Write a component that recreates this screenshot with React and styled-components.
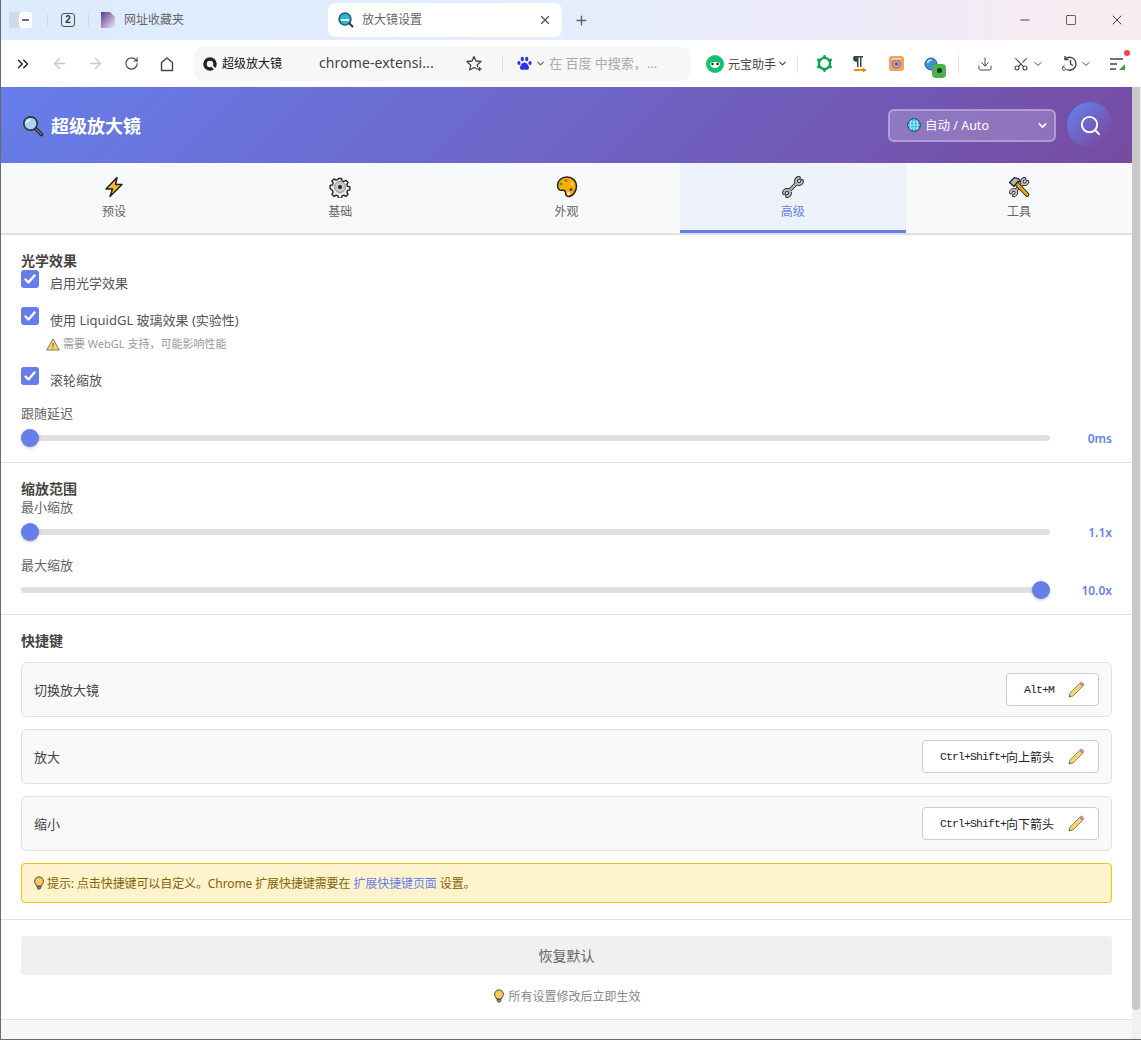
import React from "react";
import styled, { createGlobalStyle } from "styled-components";
import { ArrowLeft, ArrowRight, RotateCw, Download, Scissors, ChevronDown, ChevronsRight, Plus, X, Minus, Square, Search } from "lucide-react";

const cjk = `"Noto Sans", "Noto Sans CJK SC", sans-serif`;
const Global = createGlobalStyle`
  html, body { margin: 0; padding: 0; background: #fff; }
  body { font-family: ${cjk}; overflow: hidden; }
  * { box-sizing: border-box; }
`;

const Frame = styled.div`
  width: 1141px; height: 1040px; display: flex; flex-direction: column;
  border-left: 1px solid #6a6a6a; border-bottom: 1px solid #6a6a6a; background: #fff; overflow: hidden;
`;
const TitleBar = styled.div`
  height: 40px; flex: none; display: flex; align-items: center; padding-left: 8px;
  background: linear-gradient(90deg, #dcecfd 0%, #e4edfd 50%, #eceafb 70%, #f9ecef 100%);
`;
const ToggleIcon = styled.div`
  width: 23px; height: 16px; border-radius: 3px; background: #cfdbe8; display: flex; justify-content: flex-end;
`;
const ToggleInner = styled.div`
  width: 13px; height: 16px; background: #fff; border-radius: 3px; display: flex; align-items: center; justify-content: center;
  &::before { content: ""; width: 7px; height: 2px; background: #6d7278; }
`;
const TitleSep = styled.div`
  width: 1px; height: 12px; background: #cdd6e2; margin: ${p => p.$m};
`;
const CountBadge = styled.div`
  width: 14px; height: 14px; border: 1.5px solid #4a5058; border-radius: 3px; font-size: 10px; line-height: 11px;
  text-align: center; color: #333; font-weight: 700; font-family: "Liberation Sans", sans-serif;
`;
const FolderIcon = styled.svg`
  margin-right: 8px; flex: none;
`;
const TabText = styled.span`
  font-size: 12px; color: #666; line-height: 16px; white-space: nowrap;
`;
const ActiveTab = styled.div`
  width: 234px; height: 34px; margin-left: ${p => p.$ml}px; background: #fff; border-radius: 8px; display: flex; align-items: center;
  padding: 0 10px; gap: 8px;
  svg:last-child { margin-left: auto; }
`;
const NewTab = styled.div`
  margin-left: 12px; display: flex; color: #5d6269;
`;
const WindowBtns = styled.div`
  margin-left: auto; padding-right: 1px; display: flex; align-items: center; color: #111;
`;
const WinBtn = styled.div`
  width: 46px; height: 40px; display: flex; align-items: center; justify-content: center;
`;
const ToolBar = styled.div`
  height: 47px; flex: none; display: flex; align-items: center; padding-left: 4px; background: #fff;
`;
const ToolBtn = styled.div`
  width: ${p => p.$w || 36}px; height: 36px; flex: none; display: flex; align-items: center; justify-content: center; gap: ${p => p.$gap || 1}px;
  color: ${p => p.$c || "#444"}; position: relative;
`;
const AddressBar = styled.div`
  width: 497px; height: 34px; margin-left: 8px; background: #f7f7f7; border-radius: 10px; display: flex; align-items: center; padding-left: 10px;
`;
const SiteName = styled.span`
  font-size: 12px; color: #111; margin: 0 0 2px 5px; width: 97px; white-space: nowrap;
`;
const UrlText = styled.span`
  font-size: 14px; color: #444; width: 137px; margin-bottom: 2px; white-space: nowrap; letter-spacing: .1px;
`;
const BarSep = styled.div`
  width: 1px; height: 18px; background: #e2e2e2; flex: none; margin: ${p => p.$m};
`;
const SearchHint = styled.span`
  font-size: 13px; color: #aaa; white-space: nowrap; margin: 0 0 2px 3px;
`;
const Yuanbao = styled.div`
  margin-left: 16px; display: flex; align-items: center; gap: 4px; font-size: 12px; color: #444; white-space: nowrap; width: 91px;
`;
const RedDot = styled.span`
  position: absolute; right: 5px; top: 4px; width: 6px; height: 6px; border-radius: 50%; background: #f44336;
`;
const GreenBadge = styled.span`
  position: absolute; left: 18px; top: 18px; width: 14px; height: 14px; border-radius: 4px; background: #4caf50;
  display: flex; align-items: center; justify-content: center;
  &::after { content: ""; width: 5px; height: 5px; background: #173a1a; border-radius: 50%; }
`;

const Viewport = styled.div`
  flex: 1; min-height: 0; display: flex;
`;
const Page = styled.div`
  width: 1131px; flex: none; display: flex; flex-direction: column;
`;
const Scrollbar = styled.div`
  flex: 1; background: #f1f1f1;
`;
const ScrollThumb = styled.div`
  height: 923px; width: 8px; background: #c8c8c8; border-radius: 0 0 4px 4px;
`;
const Header = styled.header`
  height: 76px; flex: none; display: flex; align-items: center; padding: 0 19px 0 21px;
  background: linear-gradient(135deg, #667eea 0%, #764ba2 100%);
`;
const Title = styled.h1`
  margin: 2px 0 0; font-size: 18px; font-weight: 700; color: #fff; display: flex; align-items: center; gap: 7px; line-height: 24px;
`;
const LangSelect = styled.div`
  margin-left: auto; width: 168px; height: 33px; border: 2px solid rgba(255,255,255,.3); border-radius: 6px; background: rgba(255,255,255,.2);
  display: flex; align-items: center; padding: 0 5px 0 17px; gap: 4px; color: #fff; font-size: 12.5px;
  svg:last-child { margin-left: auto; }
`;
const LangText = styled.span`
  margin-bottom: 2px;
`;
const SearchCircle = styled.div`
  width: 46px; height: 46px; margin-left: 11px; border-radius: 50%; color: #fff; display: flex; align-items: center; justify-content: center;
  background: linear-gradient(135deg, #667eea 10%, rgba(118,75,162,0) 80%);
`;
const Tabs = styled.nav`
  height: 72px; flex: none; display: flex; background: #f8f9fa; border-bottom: 2px solid #e0e0e0;
`;
const Tab = styled.div`
  flex: 1; height: 70px; display: flex; flex-direction: column; align-items: center; padding-top: 13px; gap: 6px;
  font-size: 12px; line-height: 16px; color: ${p => p.$active ? "#667eea" : "#666"};
  background: ${p => p.$active ? "#eef2fa" : "transparent"};
  border-bottom: 3px solid ${p => p.$active ? "#667eea" : "transparent"};
`;
const TabIcon = styled.svg`
  width: 22px; height: 22px; display: block;
`;
const Section = styled.section`
  padding: ${p => p.$pad || "18px 20px 15px"}; border-bottom: 1px solid #e0e0e0; display: flex; flex-direction: column;
`;
const SectionTitle = styled.h3`
  margin: 0; font-size: 14px; line-height: 16px; font-weight: 600; color: #444;
`;
const CheckRow = styled.label`
  display: flex; gap: 11px; margin-top: ${p => p.$mt}px; color: #555; font-size: 13px;
`;
const CheckBox = styled.span`
  width: 18px; height: 18px; border-radius: 3px; background: #667eea; display: flex; align-items: center; justify-content: center; flex: none;
`;
const CheckLabel = styled.span`
  line-height: 18px; margin: 4px 0 1px; white-space: nowrap;
`;
const Hint = styled.div`
  margin: 7px 0 0 25px; height: 14px; display: flex; align-items: center; gap: 3px; font-size: 11px; color: #999; line-height: 14px;
`;
const FieldLabel = styled.div`
  font-size: 13px; line-height: 18px; color: #666; margin-top: ${p => p.$mt}px;
`;
const SliderRow = styled.div`
  display: flex; align-items: center; height: 18px; margin-top: ${p => p.$mt}px;
`;
const Track = styled.div`
  position: relative; flex: 1; height: 6px; border-radius: 3px; background: #e0e0e0;
`;
const Thumb = styled.span`
  position: absolute; top: -6px; width: 18px; height: 18px; border-radius: 50%; background: #667eea; box-shadow: 0 1px 3px rgba(0,0,0,.25);
`;
const SliderValue = styled.span`
  width: 62px; text-align: right; flex: none; font-size: 12px; font-weight: 600; color: #667eea; margin-top: 1px;
`;
const ShortcutRow = styled.div`
  height: 55px; margin-top: ${p => p.$mt}px; display: flex; align-items: center; justify-content: space-between;
  padding: 0 12px; background: #f9f9f9; border: 1px solid #e0e0e0; border-radius: 6px; font-size: 13px; color: #444;
`;
const KeyButton = styled.div`
  height: 33px; display: flex; align-items: center; gap: 13px; padding: 0 13px 0 17px; background: #fff; border: 1px solid #ccc; border-radius: 4px;
  color: #222; white-space: nowrap;
`;
const KeyText = styled.span`
  font-family: "Liberation Mono", monospace; font-size: 11.5px; letter-spacing: -.9px; display: inline-flex; align-items: center;
`;
const KeyCjk = styled.span`
  font-family: "Noto Sans CJK SC", sans-serif; font-size: 12px; letter-spacing: 0;
`;
const Tip = styled.div`
  height: 40px; margin-top: 12px; display: flex; align-items: center; gap: 1px; padding-left: 10px; background: #fff3cd; border: 1px solid #ffc107; border-radius: 4px;
  font-size: 12px; letter-spacing: -.1px; color: #856404; white-space: pre;
`;
const TipLink = styled.a`
  color: #667eea; text-decoration: none;
`;
const ResetButton = styled.div`
  height: 39px; padding-bottom: 2px; background: #f0f0f0; border-radius: 4px; display: flex; align-items: center; justify-content: center; font-size: 14px; color: #666;
`;
const SaveNote = styled.div`
  margin-top: 13px; height: 16px; display: flex; align-items: center; justify-content: center; gap: 2px; font-size: 12px; color: #888;
`;
const Footer = styled.div`
  flex: 1; background: #f7f7f7;
`;

const Magnifier = ({ s = 22 }) => (
  <svg width={s} height={s} viewBox="0 0 22 22">
    <path d="M13 13l6.500 6.500" stroke="#222" strokeWidth="3.600" strokeLinecap="round" />
    <path d="M13.600 13.600l5.600 5.600" stroke="#777" strokeWidth="1.400" strokeLinecap="round" />
    <circle cx="8.500" cy="8.500" r="6.700" fill="#a9d7f2" stroke="#333" strokeWidth="1.700" />
    <path d="M4.800 8a4 4 0 0 1 3.400-3.300" stroke="#e8f6ff" strokeWidth="1.400" fill="none" />
  </svg>
);
const Bulb = ({ s = 14 }) => (
  <svg width={s} height={s} viewBox="0 0 14 16">
    <path d="M7 1a5 5 0 0 0-5 5c0 2.200 1.600 3.400 2.300 5.500h5.400C10.400 9.400 12 8.200 12 6a5 5 0 0 0-5-5z" fill="#fdc75b" stroke="#2b2b2b" />
    <path d="M4.800 12h4.400v1.600L8 15H6l-1.200-1.400z" fill="#8a8a8a" stroke="#2b2b2b" strokeWidth=".7" />
  </svg>
);
const Pencil = () => (
  <svg width="18" height="18" viewBox="0 0 18 18">
    <path d="M2 16l1-4L12.500 2.500l3 3L6 15z" fill="#f9d566" stroke="#8a8a8a" strokeWidth="1" strokeLinejoin="round" />
    <path d="M12.500 2.500l1-1a1.200 1.200 0 0 1 1.700 0l1.300 1.300a1.200 1.200 0 0 1 0 1.700l-1 1z" fill="#e58a94" stroke="#8a8a8a" strokeWidth=".8" />
    <path d="M2 16l.5-2 1.500 1.500z" fill="#555" />
  </svg>
);
const Check = () => (
  <svg width="14" height="14" viewBox="0 0 14 14"><path d="M2.500 7.500l3 3 6-7" fill="none" stroke="#fff" strokeWidth="2.400" strokeLinecap="round" strokeLinejoin="round" /></svg>
);

const wrenchShape = "M20 5A3 3 0 1 1 17 2M15 7L7 15M2 17A3 3 0 1 1 5 20";
const TabGlyphs = {
  bolt: <path d="M14 1.500L3 13h6.500l-2.500 7.500L19 8.500h-6.500z" fill="#fdb833" stroke="#222" strokeWidth="1.500" strokeLinejoin="round" />,
  gear: (
    <>
      <path d="M9.300 1.500h3.400l.6 2.600 2 .8 2.300-1.400 2.400 2.400-1.400 2.300.8 2 2.600.6v3.400l-2.600.6-.8 2 1.400 2.300-2.400 2.400-2.300-1.400-2 .8-.6 2.600H9.300l-.6-2.600-2-.8-2.300 1.400-2.400-2.400 1.400-2.300-.8-2L0 12.700V9.300l2.600-.6.8-2L2 4.400l2.400-2.400 2.300 1.400 2-.8z" transform="translate(1.100 1.100) scale(.9)" fill="#eee" stroke="#222" strokeWidth="1.500" strokeLinejoin="round" />
      <circle cx="11" cy="11" r="5.500" fill="#c9c9c9" stroke="#8b8b8b" />
      <circle cx="11" cy="11" r="2" fill="#222" />
    </>
  ),
  palette: (
    <>
      <path d="M11 1C5.500 1 1.500 4.700 1.500 9.500c0 3 2 5.200 4.500 4.800 2-.3 3.500 0 3.500 2.200 0 2.600 1.500 4.500 4 4 4-1 7-5.500 7-10.500C20.500 5 16.500 1 11 1z" fill="#fbb000" stroke="#222" strokeWidth="1.500" />
      <circle cx="10" cy="4.500" r="1.500" fill="#e8503a" />
      <circle cx="5" cy="8" r="1.500" fill="#3aa63a" />
      <circle cx="16" cy="8" r="1.500" fill="#ffd84d" />
      <circle cx="15" cy="13.500" r="1.500" fill="#1a4fd0" />
      <circle cx="12.500" cy="17.500" r="1.500" fill="#fff2a8" />
    </>
  ),
  wrench: (
    <>
      <path d={wrenchShape} fill="none" stroke="#222" strokeWidth="3.800" strokeLinecap="round" />
      <path d={wrenchShape} fill="none" stroke="#b8b8b8" strokeWidth="1.900" strokeLinecap="round" />
    </>
  ),
  tools: (
    <>
      <g transform="translate(1 1) scale(.92)">
        <path d={wrenchShape} fill="none" stroke="#222" strokeWidth="3.800" strokeLinecap="round" />
        <path d={wrenchShape} fill="none" stroke="#c4c4c4" strokeWidth="1.900" strokeLinecap="round" />
      </g>
      <path d="M8 7L19 18.500" stroke="#222" strokeWidth="4.600" strokeLinecap="round" />
      <path d="M8 7L19 18.500" stroke="#f2a712" strokeWidth="2.600" strokeLinecap="round" />
      <path d="M1.500 6.500L6.500 1.500L11 3L12 5.500L9.500 6L6 10.500z" fill="#b5b5b5" stroke="#222" strokeWidth="1.300" strokeLinejoin="round" />
    </>
  ),
};

const TabItem = ({ glyph, label, active }) => (
  <Tab $active={active}>
    <TabIcon viewBox="0 0 22 22">{TabGlyphs[glyph]}</TabIcon>
    {label}
  </Tab>
);
const CheckItem = ({ children, mt }) => (
  <CheckRow $mt={mt}><CheckBox><Check /></CheckBox><CheckLabel>{children}</CheckLabel></CheckRow>
);
const Slider = ({ frac, value, mt }) => (
  <SliderRow $mt={mt}>
    <Track><Thumb style={{ left: `calc((100% - 18px) * ${frac})` }} /></Track>
    <SliderValue>{value}</SliderValue>
  </SliderRow>
);
const Shortcut = ({ label, keys, cjkKeys, mt }) => (
  <ShortcutRow $mt={mt}>
    {label}
    <KeyButton>
      <KeyText>{keys}{cjkKeys && <KeyCjk>{cjkKeys}</KeyCjk>}</KeyText>
      <Pencil />
    </KeyButton>
  </ShortcutRow>
);

const Favicon = () => (
  <svg width="16" height="16" viewBox="0 0 16 16">
    <circle cx="7" cy="7" r="6" fill="#2fb6c6" stroke="#1d5f88" strokeWidth="1.500" />
    <path d="M3 8h8" stroke="#e5fbff" strokeWidth="2" />
    <path d="M11 11l4 4" stroke="#333" strokeWidth="2" />
  </svg>
);

export default function App() {
  return (
    <>
      <Global />
      <Frame>
        <TitleBar>
          <ToggleIcon><ToggleInner /></ToggleIcon>
          <TitleSep $m="0 13px 0 15px" />
          <CountBadge>2</CountBadge>
          <TitleSep $m="0 11px 0 13px" />
          <FolderIcon width="16" height="16" viewBox="0 0 16 16">
            <defs><linearGradient id="fav" x1="0" y1="0" x2="1" y2="1"><stop offset="0" stopColor="#5d3a8c" /><stop offset="1" stopColor="#efeaf3" /></linearGradient></defs>
            <path d="M1 0h9l5 5v11H1z" fill="url(#fav)" />
          </FolderIcon>
          <TabText>网址收藏夹</TabText>
          <ActiveTab $ml={144}>
            <Favicon />
            <TabText>放大镜设置</TabText>
            <X size={14} color="#555" />
          </ActiveTab>
          <NewTab><Plus size={15} strokeWidth={2.200} /></NewTab>
          <WindowBtns>
            <WinBtn><Minus size={14} strokeWidth={1.300} /></WinBtn>
            <WinBtn><Square size={12} strokeWidth={1.300} /></WinBtn>
            <WinBtn><X size={16} strokeWidth={1.200} /></WinBtn>
          </WindowBtns>
        </TitleBar>
        <ToolBar>
          <ToolBtn $c="#222"><ChevronsRight size={18} strokeWidth={2} /></ToolBtn>
          <ToolBtn $c="#c9c9c9"><ArrowLeft size={17} /></ToolBtn>
          <ToolBtn $c="#c9c9c9"><ArrowRight size={17} /></ToolBtn>
          <ToolBtn><RotateCw size={15} strokeWidth={1.800} /></ToolBtn>
          <ToolBtn>
            <svg width="16" height="16" viewBox="0 0 16 16" fill="none" stroke="#444" strokeWidth="1.400" strokeLinejoin="round"><path d="M2.500 6.500L8 2l5.500 4.500V14.500h-11z" /></svg>
          </ToolBtn>
          <AddressBar>
            <svg width="14" height="14" viewBox="0 0 14 14"><circle cx="7" cy="7" r="5" fill="none" stroke="#222" strokeWidth="3.500" /><path d="M8 8l5 5" stroke="#f7f7f7" strokeWidth="2" /></svg>
            <SiteName>超级放大镜</SiteName>
            <UrlText>chrome-extensi...</UrlText>
            <ToolBtn>
              <svg width="17" height="17" viewBox="0 0 17 17" fill="none" stroke="#444" strokeWidth="1.300" strokeLinejoin="round"><path d="M8 1.500l2 4.500 5 .5-3.700 3.300 1 4.700L8 12.500 3.700 15l1-4.700L1 6.500 6 6z" /><path d="M11 14h5M13.500 11.500v5" stroke="#f7f7f7" strokeWidth="3" /><path d="M11.500 14h4M13.500 12v4" /></svg>
            </ToolBtn>
            <BarSep $m="0 14px 0 10px" />
            <svg width="15" height="15" viewBox="0 0 15 15" fill="#2932e1"><ellipse cx="2" cy="7" rx="1.600" ry="2" /><ellipse cx="5.300" cy="3" rx="1.600" ry="2.200" /><ellipse cx="9.700" cy="3" rx="1.600" ry="2.200" /><ellipse cx="13" cy="7" rx="1.600" ry="2" /><path d="M7.500 6.500c-2 0-4.500 3-4.500 5.500 0 2 2.500 2 4.500 1.500 2 .5 4.500.5 4.500-1.500 0-2.500-2.500-5.500-4.500-5.500z" /></svg>
            <ChevronDown size={11} color="#666" strokeWidth={2.500} style={{ marginLeft: 3 }} />
            <SearchHint>在 百度 中搜索，...</SearchHint>
          </AddressBar>
          <Yuanbao>
            <svg width="18" height="18" viewBox="0 0 18 18"><circle cx="9" cy="9" r="9" fill="#15c26b" /><path d="M4 8c2-1.500 8-1.500 10 0 0 3-2 5-5 5S4 11 4 8z" fill="#fff" /><circle cx="6.500" cy="9" r="1.200" fill="#123" /><circle cx="11.500" cy="9" r="1.200" fill="#123" /></svg>
            元宝助手
            <ChevronDown size={11} color="#444" strokeWidth={2.500} style={{ marginLeft: -3 }} />
          </Yuanbao>
          <BarSep $m="0 8px 0 0" />
          <ToolBtn>
            <svg width="17" height="17" viewBox="0 0 17 17"><circle cx="8.500" cy="8.500" r="5.600" fill="none" stroke="#0da44f" strokeWidth="2.400" /><g fill="#0da44f"><circle cx="8.500" cy="1.500" r="1.400" /><circle cx="8.500" cy="15.500" r="1.400" /><circle cx="2.400" cy="5" r="1.400" /><circle cx="14.600" cy="5" r="1.400" /><circle cx="2.400" cy="12" r="1.400" /><circle cx="14.600" cy="12" r="1.400" /></g></svg>
          </ToolBtn>
          <ToolBtn>
            <svg width="16" height="18" viewBox="0 0 16 18"><path d="M2 1h9v1.500H9.500V12H8V2.500H6.500V12H5V7C3 7 1 6 1 4s1-3 1-3z" fill="#37474f" /><path d="M2 15h11" stroke="#f57c00" strokeWidth="1.800" /><path d="M11 12.500L14.500 15 11 17.500z" fill="#f57c00" /></svg>
          </ToolBtn>
          <ToolBtn>
            <svg width="15" height="15" viewBox="0 0 15 15"><rect width="15" height="15" rx="3" fill="#f3a267" /><circle cx="7.500" cy="8" r="4" fill="#c9b6c9" stroke="#a4553a" /><circle cx="7.500" cy="8" r="2" fill="#5063c9" /><path d="M3 3h9" stroke="#fbdcc0" strokeWidth="1.500" /></svg>
          </ToolBtn>
          <ToolBtn>
            <svg width="14" height="14" viewBox="0 0 14 14" style={{ marginRight: 2 }}><circle cx="7" cy="7" r="6" fill="#3f8fd8" stroke="#23567f" /><path d="M3.500 6a4 4 0 0 1 4-3" stroke="#d8f1ff" strokeWidth="1.500" fill="none" /></svg>
            <GreenBadge />
          </ToolBtn>
          <BarSep $m="0 8px" />
          <ToolBtn><Download size={16} strokeWidth={1.500} /></ToolBtn>
          <ToolBtn $w={50} $gap={3}><Scissors size={16} strokeWidth={1.600} style={{ transform: "rotate(-90deg)" }} /><ChevronDown size={12} strokeWidth={2} /></ToolBtn>
          <ToolBtn $w={46} $gap={2}>
            <svg width="17" height="17" viewBox="0 0 17 17" fill="none" stroke="#444" strokeWidth="1.400"><path d="M4 4a6.500 6.500 0 1 1 1.500 10.500" /><path d="M4 1v3.500h3.500M9.500 5v4l2.500 1.500" /><path d="M3.500 10c-1.300.7-2 2-2 3.500 0 1.200.6 2 1.500 2s1.500-.8 1.500-1.600-.6-1.400-1.500-1.400-1.500.6-1.500 1.200" strokeWidth="1" /></svg>
            <ChevronDown size={12} strokeWidth={2} />
          </ToolBtn>
          <ToolBtn>
            <svg width="17" height="14" viewBox="0 0 17 14"><path d="M1 2h13M1 7h7M1 12h6" stroke="#444" strokeWidth="1.500" /><path d="M10 13l6-6v6z" fill="#3f9a4a" /></svg>
            <RedDot />
          </ToolBtn>
        </ToolBar>
        <Viewport>
          <Page>
            <Header>
              <Title><Magnifier />超级放大镜</Title>
              <LangSelect>
                <svg width="14" height="14" viewBox="0 0 14 14"><circle cx="7" cy="7" r="6.300" fill="#1fb6e6" stroke="#1d3b4a" strokeWidth=".9" /><path d="M1 7h12M7 1v12M2.500 4h9M2.500 10h9M4.500 2c-1.500 3-1.500 7 0 10M9.500 2c1.500 3 1.500 7 0 10" stroke="#e9fbff" strokeWidth=".7" fill="none" /></svg>
                <LangText>自动 / Auto</LangText>
                <ChevronDown size={13} strokeWidth={3} />
              </LangSelect>
              <SearchCircle><Search size={23} strokeWidth={2} /></SearchCircle>
            </Header>
            <Tabs>
              <TabItem glyph="bolt" label="预设" />
              <TabItem glyph="gear" label="基础" />
              <TabItem glyph="palette" label="外观" />
              <TabItem glyph="wrench" label="高级" active />
              <TabItem glyph="tools" label="工具" />
            </Tabs>
            <Section>
              <SectionTitle>光学效果</SectionTitle>
              <CheckItem mt={1}>启用光学效果</CheckItem>
              <CheckItem mt={14}>使用 LiquidGL 玻璃效果 (实验性)</CheckItem>
              <Hint>
                <svg width="14" height="13" viewBox="0 0 14 13"><path d="M7 1l6.300 11H.7z" fill="#fbd36b" stroke="#8a7a4a" strokeLinejoin="round" /><path d="M7 5v3.500M7 9.500v1" stroke="#444" /></svg>
                需要 WebGL 支持，可能影响性能
              </Hint>
              <CheckItem mt={16}>滚轮缩放</CheckItem>
              <FieldLabel $mt={14}>跟随延迟</FieldLabel>
              <Slider frac={0} value="0ms" mt={7} />
            </Section>
            <Section>
              <SectionTitle>缩放范围</SectionTitle>
              <FieldLabel $mt={1}>最小缩放</FieldLabel>
              <Slider frac={0} value="1.1x" mt={7} />
              <FieldLabel $mt={15}>最大缩放</FieldLabel>
              <Slider frac={1} value="10.0x" mt={7} />
            </Section>
            <Section $pad="18px 20px 16px">
              <SectionTitle>快捷键</SectionTitle>
              <Shortcut label="切换放大镜" keys="Alt+M" mt={13} />
              <Shortcut label="放大" keys="Ctrl+Shift+" cjkKeys="向上箭头" mt={12} />
              <Shortcut label="缩小" keys="Ctrl+Shift+" cjkKeys="向下箭头" mt={12} />
              <Tip>
                <Bulb />
                <span>提示: 点击快捷键可以自定义。Chrome 扩展快捷键需要在 <TipLink href="#">扩展快捷键页面</TipLink> 设置。</span>
              </Tip>
            </Section>
            <Section $pad="16px 20px 15px">
              <ResetButton>恢复默认</ResetButton>
              <SaveNote><Bulb />所有设置修改后立即生效</SaveNote>
            </Section>
            <Footer />
          </Page>
          <Scrollbar><ScrollThumb /></Scrollbar>
        </Viewport>
      </Frame>
    </>
  );
}
